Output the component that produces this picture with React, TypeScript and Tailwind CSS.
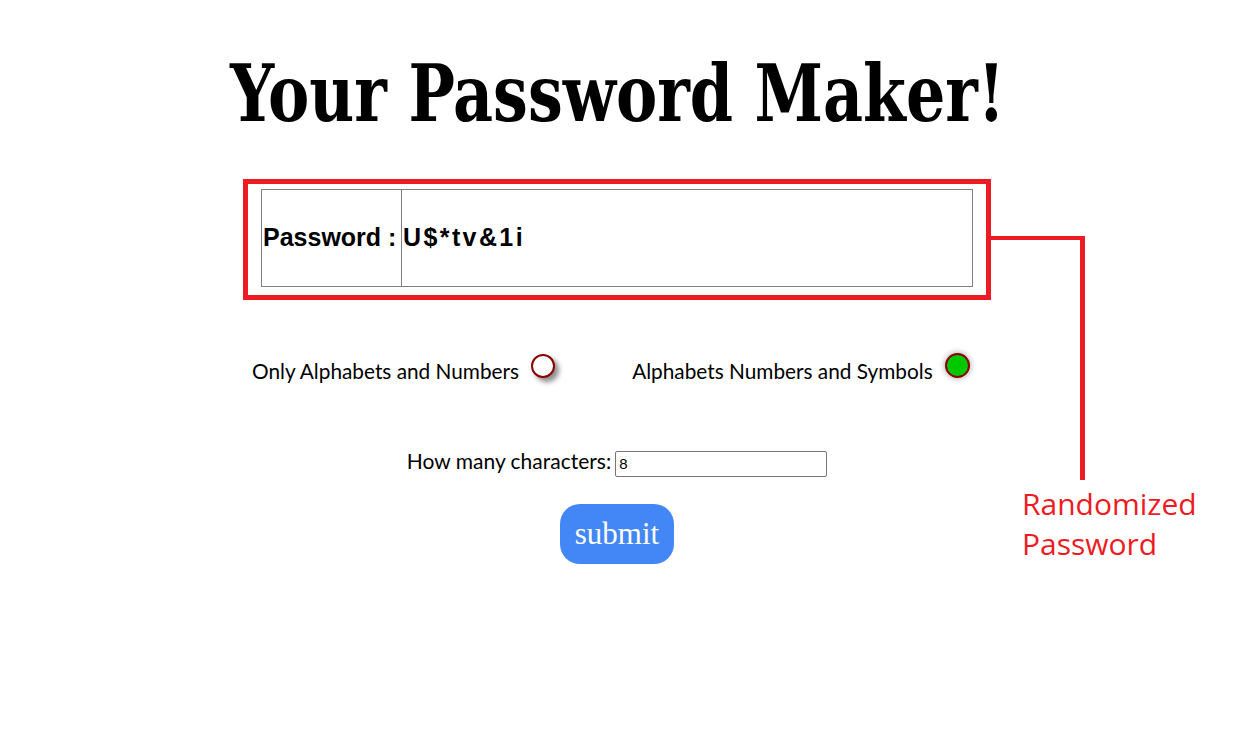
import React from "react";

export default function App() {
  return (
    <div className="relative w-full h-[740px] bg-white overflow-hidden">
      <div className="ml-[237px] w-[760px] flex flex-col items-center">
        <h1
          className="mt-[48px] h-[92px] text-[79px] leading-[92px] font-bold text-black whitespace-nowrap scale-x-[0.87] origin-center"
          style={{ fontFamily: '"DejaVu Serif Condensed", "DejaVu Serif", serif' }}
        >
          Your Password Maker!
        </h1>
        <div className="mt-[39px] w-[748px] h-[121px] border-[5px] border-[#ed1c24] pl-[13px] pt-[5px]">
          <table className="w-[712px] h-[98px] border-collapse border border-[#808080]" style={{ fontFamily: '"Liberation Sans", Arial, sans-serif' }}>
            <tbody>
              <tr>
                <td className="w-[140px] border border-[#808080] text-[25px] font-bold text-black p-0 pl-[1px] whitespace-nowrap">Password :</td>
                <td className="border border-[#808080] text-[25px] font-bold text-black p-0 pl-[1px] tracking-[2.4px]">U$*tv&amp;1i</td>
              </tr>
            </tbody>
          </table>
        </div>
        <div className="mt-[53px] w-full flex items-center pl-[15px] text-[20.8px] leading-[31px] text-black" style={{ fontFamily: 'Lato, "Open Sans", sans-serif' }}>
          <span>Only Alphabets and Numbers</span>
          <span className="ml-[12px] mb-[10px] w-[24px] h-[24px] rounded-full border-[2px] border-[#8b0000] bg-white shadow-[4px_4px_5px_rgba(0,0,0,0.45)]" />
          <span className="ml-[77px]">Alphabets Numbers and Symbols</span>
          <span className="ml-[12px] mb-[10px] w-[25px] h-[25px] rounded-full border-[2px] border-[#8b0000] bg-[#00c800] shadow-[0_0_6px_rgba(0,0,0,0.4)]" />
        </div>
        <div className="mt-[57px] flex items-center text-[21px] leading-[31px] text-black" style={{ fontFamily: 'Lato, "Open Sans", sans-serif' }}>
          <span className="mb-[6px]">How many characters:</span>
          <input
            defaultValue="8"
            className="ml-[4px] w-[212px] h-[26px] border border-[#767676] rounded-[2px] px-[3px] text-[15px] text-black outline-none"
            style={{ fontFamily: '"Liberation Sans", Arial, sans-serif' }}
          />
        </div>
        <button
          className="mt-[22px] w-[114px] h-[60px] rounded-[20px] bg-[#4287f5] text-white text-[31px] leading-[60px]"
          style={{ fontFamily: '"Liberation Serif", "Times New Roman", serif' }}
        >
          submit
        </button>
      </div>
      <div className="absolute left-[991px] top-[236px] w-[94px] h-[4px] bg-[#ed1c24]" />
      <div className="absolute left-[1080px] top-[236px] w-[5px] h-[244px] bg-[#ed1c24]" />
      <div
        className="absolute left-[1022px] top-[484px] text-[30px] leading-[40px] text-[#ed1c24]"
        style={{ fontFamily: '"Open Sans", "Noto Sans", sans-serif' }}
      >
        Randomized
        <br />
        Password
      </div>
    </div>
  );
}
